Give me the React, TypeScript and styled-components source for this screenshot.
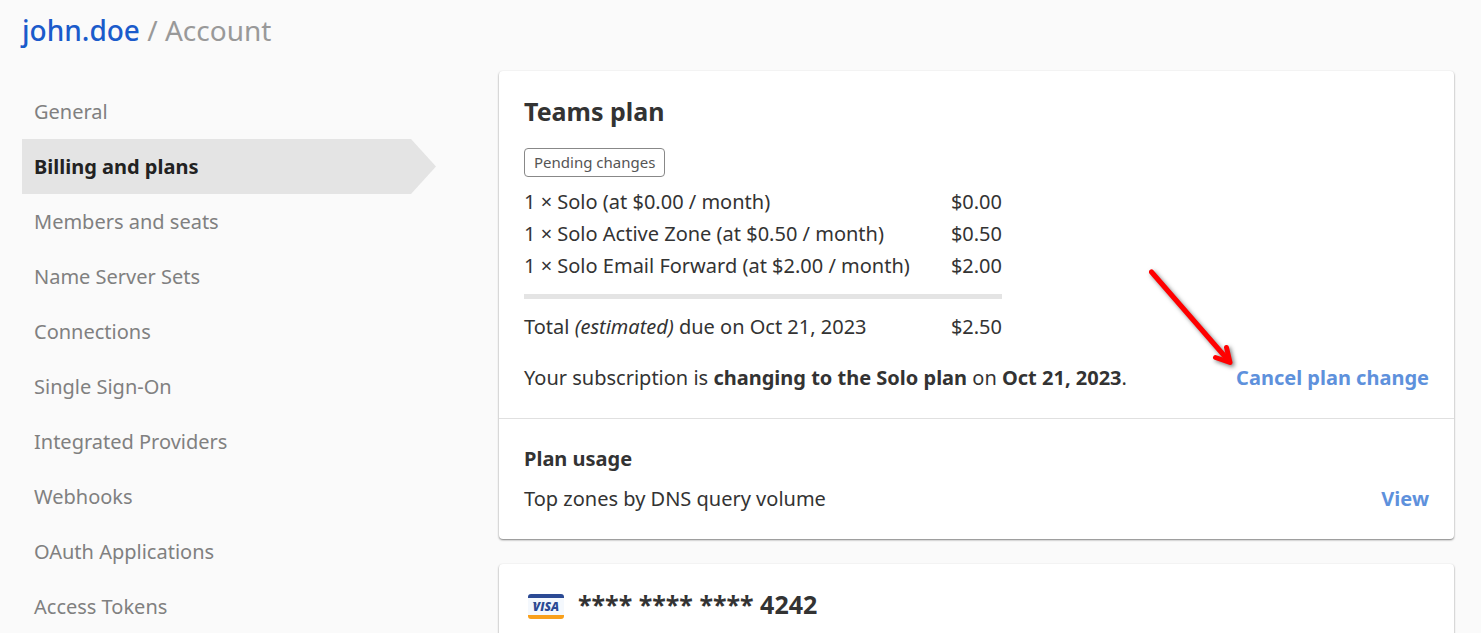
import React from "react";
import styled, { createGlobalStyle } from "styled-components";

const GlobalStyle = createGlobalStyle`
  *, *::before, *::after { box-sizing: border-box; }
  body {
    margin: 0;
    background: #fafafa;
    color: #333;
    font-family: "Noto Sans", sans-serif;
    font-size: 20px;
    line-height: 33px;
  }
`;

const Page = styled.div`
  min-height: 100vh;
  padding: 10px 27px 0 22px;
`;

const Breadcrumb = styled.h1`
  margin: 0 0 21px;
  font-size: 28px;
  line-height: 40px;
  font-weight: 400;
  color: #999;
`;

const AccountLink = styled.a`
  color: #1a5bcb;
  font-weight: 500;
  text-decoration: none;
`;

const Columns = styled.div`
  display: flex;
  align-items: flex-start;
  gap: 63px;
`;

const SideNav = styled.nav`
  flex: 0 0 414px;
  padding-top: 13px;
`;

const NavList = styled.ul`
  margin: 0;
  padding: 0;
  list-style: none;
`;

const NavLink = styled.a<{ $active: boolean }>`
  display: block;
  padding: 11px 12px;
  color: ${(p) => (p.$active ? "#222" : "#808080")};
  font-weight: ${(p) => (p.$active ? 700 : 400)};
  background: ${(p) => (p.$active ? "#e4e4e4" : "transparent")};
  clip-path: ${(p) =>
    p.$active
      ? "polygon(0 0, calc(100% - 25px) 0, 100% 50%, calc(100% - 25px) 100%, 0 100%)"
      : "none"};
  text-decoration: none;
`;

const Main = styled.main`
  flex: 1;
  min-width: 0;
  display: grid;
  gap: 25px;
`;

const Card = styled.section`
  background: #fff;
  border-radius: 4px;
  box-shadow: 0 1px 2px rgba(0, 0, 0, 0.5);
`;

const CardPart = styled.div`
  position: relative;
  padding: 23px 25px 24px;

  & + & {
    border-top: 1px solid #e0e0e0;
  }
`;

const CardTitle = styled.h2`
  margin: 0;
  font-size: 25px;
  line-height: 34px;
  font-weight: 700;
`;

const SubTitle = styled.h3`
  margin: 0 0 7px;
  font-size: 20px;
  line-height: 33px;
  font-weight: 700;
`;

const Badge = styled.span`
  display: block;
  width: fit-content;
  margin: 20px 0 9px;
  padding: 0 9px;
  border: 1px solid #888;
  border-radius: 4px;
  font-size: 15px;
  line-height: 27px;
  color: #555;
`;

const CostTable = styled.table`
  width: 478px;
  max-width: 100%;
  margin-bottom: 18px;
  border-collapse: collapse;
  line-height: 32px;

  td, th {
    padding: 0;
    font-weight: 400;
    text-align: left;
  }

  td {
    text-align: right;
  }

  tbody tr:last-child > * {
    padding-bottom: 12px;
  }

  tfoot > tr > * {
    padding-top: 12px;
    border-top: 5px solid #e4e4e4;
  }
`;

const SplitRow = styled.div`
  display: flex;
  justify-content: space-between;
  gap: 24px;
`;

const Text = styled.p`
  margin: 0;

  b {
    font-weight: 700;
  }
`;

const ActionButton = styled.button`
  padding: 0;
  border: 0;
  background: none;
  font: inherit;
  font-weight: 700;
  color: #5e91dc;
  cursor: pointer;
`;

const ActionLink = styled.a`
  font-weight: 700;
  color: #5e91dc;
  text-decoration: none;
`;

const Pointer = styled.svg`
  position: absolute;
  right: 212px;
  bottom: 41px;
  width: 100px;
  height: 112px;
  pointer-events: none;
  filter: drop-shadow(2px 2px 2px rgba(0, 0, 0, 0.5));
`;

const PaymentMethod = styled.div`
  display: flex;
  align-items: center;
  gap: 14px;
  padding-left: 4px;
`;

const CardLogo = styled.svg`
  width: 36px;
  height: 25px;
  margin-top: 4px;
`;

const navItems = [
  "General",
  "Billing and plans",
  "Members and seats",
  "Name Server Sets",
  "Connections",
  "Single Sign-On",
  "Integrated Providers",
  "Webhooks",
  "OAuth Applications",
  "Access Tokens",
];

const costs = [
  ["1 × Solo (at $0.00 / month)", "$0.00"],
  ["1 × Solo Active Zone (at $0.50 / month)", "$0.50"],
  ["1 × Solo Email Forward (at $2.00 / month)", "$2.00"],
];

function VisaLogo() {
  return (
    <CardLogo viewBox="0 0 36 25" role="img" aria-label="Visa">
      <clipPath id="visa-shape">
        <rect width="36" height="25" rx="3" />
      </clipPath>
      <g clipPath="url(#visa-shape)">
        <rect width="36" height="25" fill="#f4f8fd" />
        <rect width="36" height="4" fill="#2b4a94" />
        <rect y="21" width="36" height="4" fill="#f9a01b" />
      </g>
      <text
        x="18"
        y="17"
        textAnchor="middle"
        fontFamily="Open Sans, sans-serif"
        fontSize="12"
        fontStyle="italic"
        fontWeight="800"
        fill="#2b4a94"
      >
        VISA
      </text>
      <path d="M4.5 8.2 H8 L8.6 11.5 Q7 9.2 4.5 8.2 Z" fill="#2b4a94" />
    </CardLogo>
  );
}

export default function App() {
  return (
    <>
      <GlobalStyle />
      <Page>
        <Breadcrumb>
          <AccountLink href="#account">john.doe</AccountLink> / Account
        </Breadcrumb>
        <Columns>
          <SideNav aria-label="Account settings">
            <NavList>
              {navItems.map((item) => {
                const active = item === "Billing and plans";
                return (
                  <li key={item}>
                    <NavLink
                      href="#settings"
                      $active={active}
                      aria-current={active ? "page" : undefined}
                    >
                      {item}
                    </NavLink>
                  </li>
                );
              })}
            </NavList>
          </SideNav>
          <Main>
            <Card>
              <CardPart>
                <CardTitle>Teams plan</CardTitle>
                <Badge>Pending changes</Badge>
                <CostTable>
                  <tbody>
                    {costs.map(([label, price]) => (
                      <tr key={label}>
                        <th scope="row">{label}</th>
                        <td>{price}</td>
                      </tr>
                    ))}
                  </tbody>
                  <tfoot>
                    <tr>
                      <th scope="row">
                        Total <i>(estimated)</i> due on Oct 21, 2023
                      </th>
                      <td>$2.50</td>
                    </tr>
                  </tfoot>
                </CostTable>
                <SplitRow>
                  <Text>
                    Your subscription is <b>changing to the Solo plan</b> on{" "}
                    <b>Oct 21, 2023</b>.
                  </Text>
                  <ActionButton type="button">Cancel plan change</ActionButton>
                </SplitRow>
                <Pointer viewBox="0 0 100 112" aria-hidden="true">
                  <g
                    fill="none"
                    stroke="#f00"
                    strokeWidth="5"
                    strokeLinecap="round"
                    strokeLinejoin="round"
                  >
                    <path d="M9.5 7 L86 95" />
                    <path d="M84.5 82.5 L88 97.5 L73.5 92.5" />
                  </g>
                </Pointer>
              </CardPart>
              <CardPart>
                <SubTitle>Plan usage</SubTitle>
                <SplitRow>
                  <Text>Top zones by DNS query volume</Text>
                  <ActionLink href="#usage">View</ActionLink>
                </SplitRow>
              </CardPart>
            </Card>
            <Card>
              <CardPart>
                <PaymentMethod>
                  <VisaLogo />
                  <CardTitle>**** **** **** 4242</CardTitle>
                </PaymentMethod>
              </CardPart>
            </Card>
          </Main>
        </Columns>
      </Page>
    </>
  );
}
